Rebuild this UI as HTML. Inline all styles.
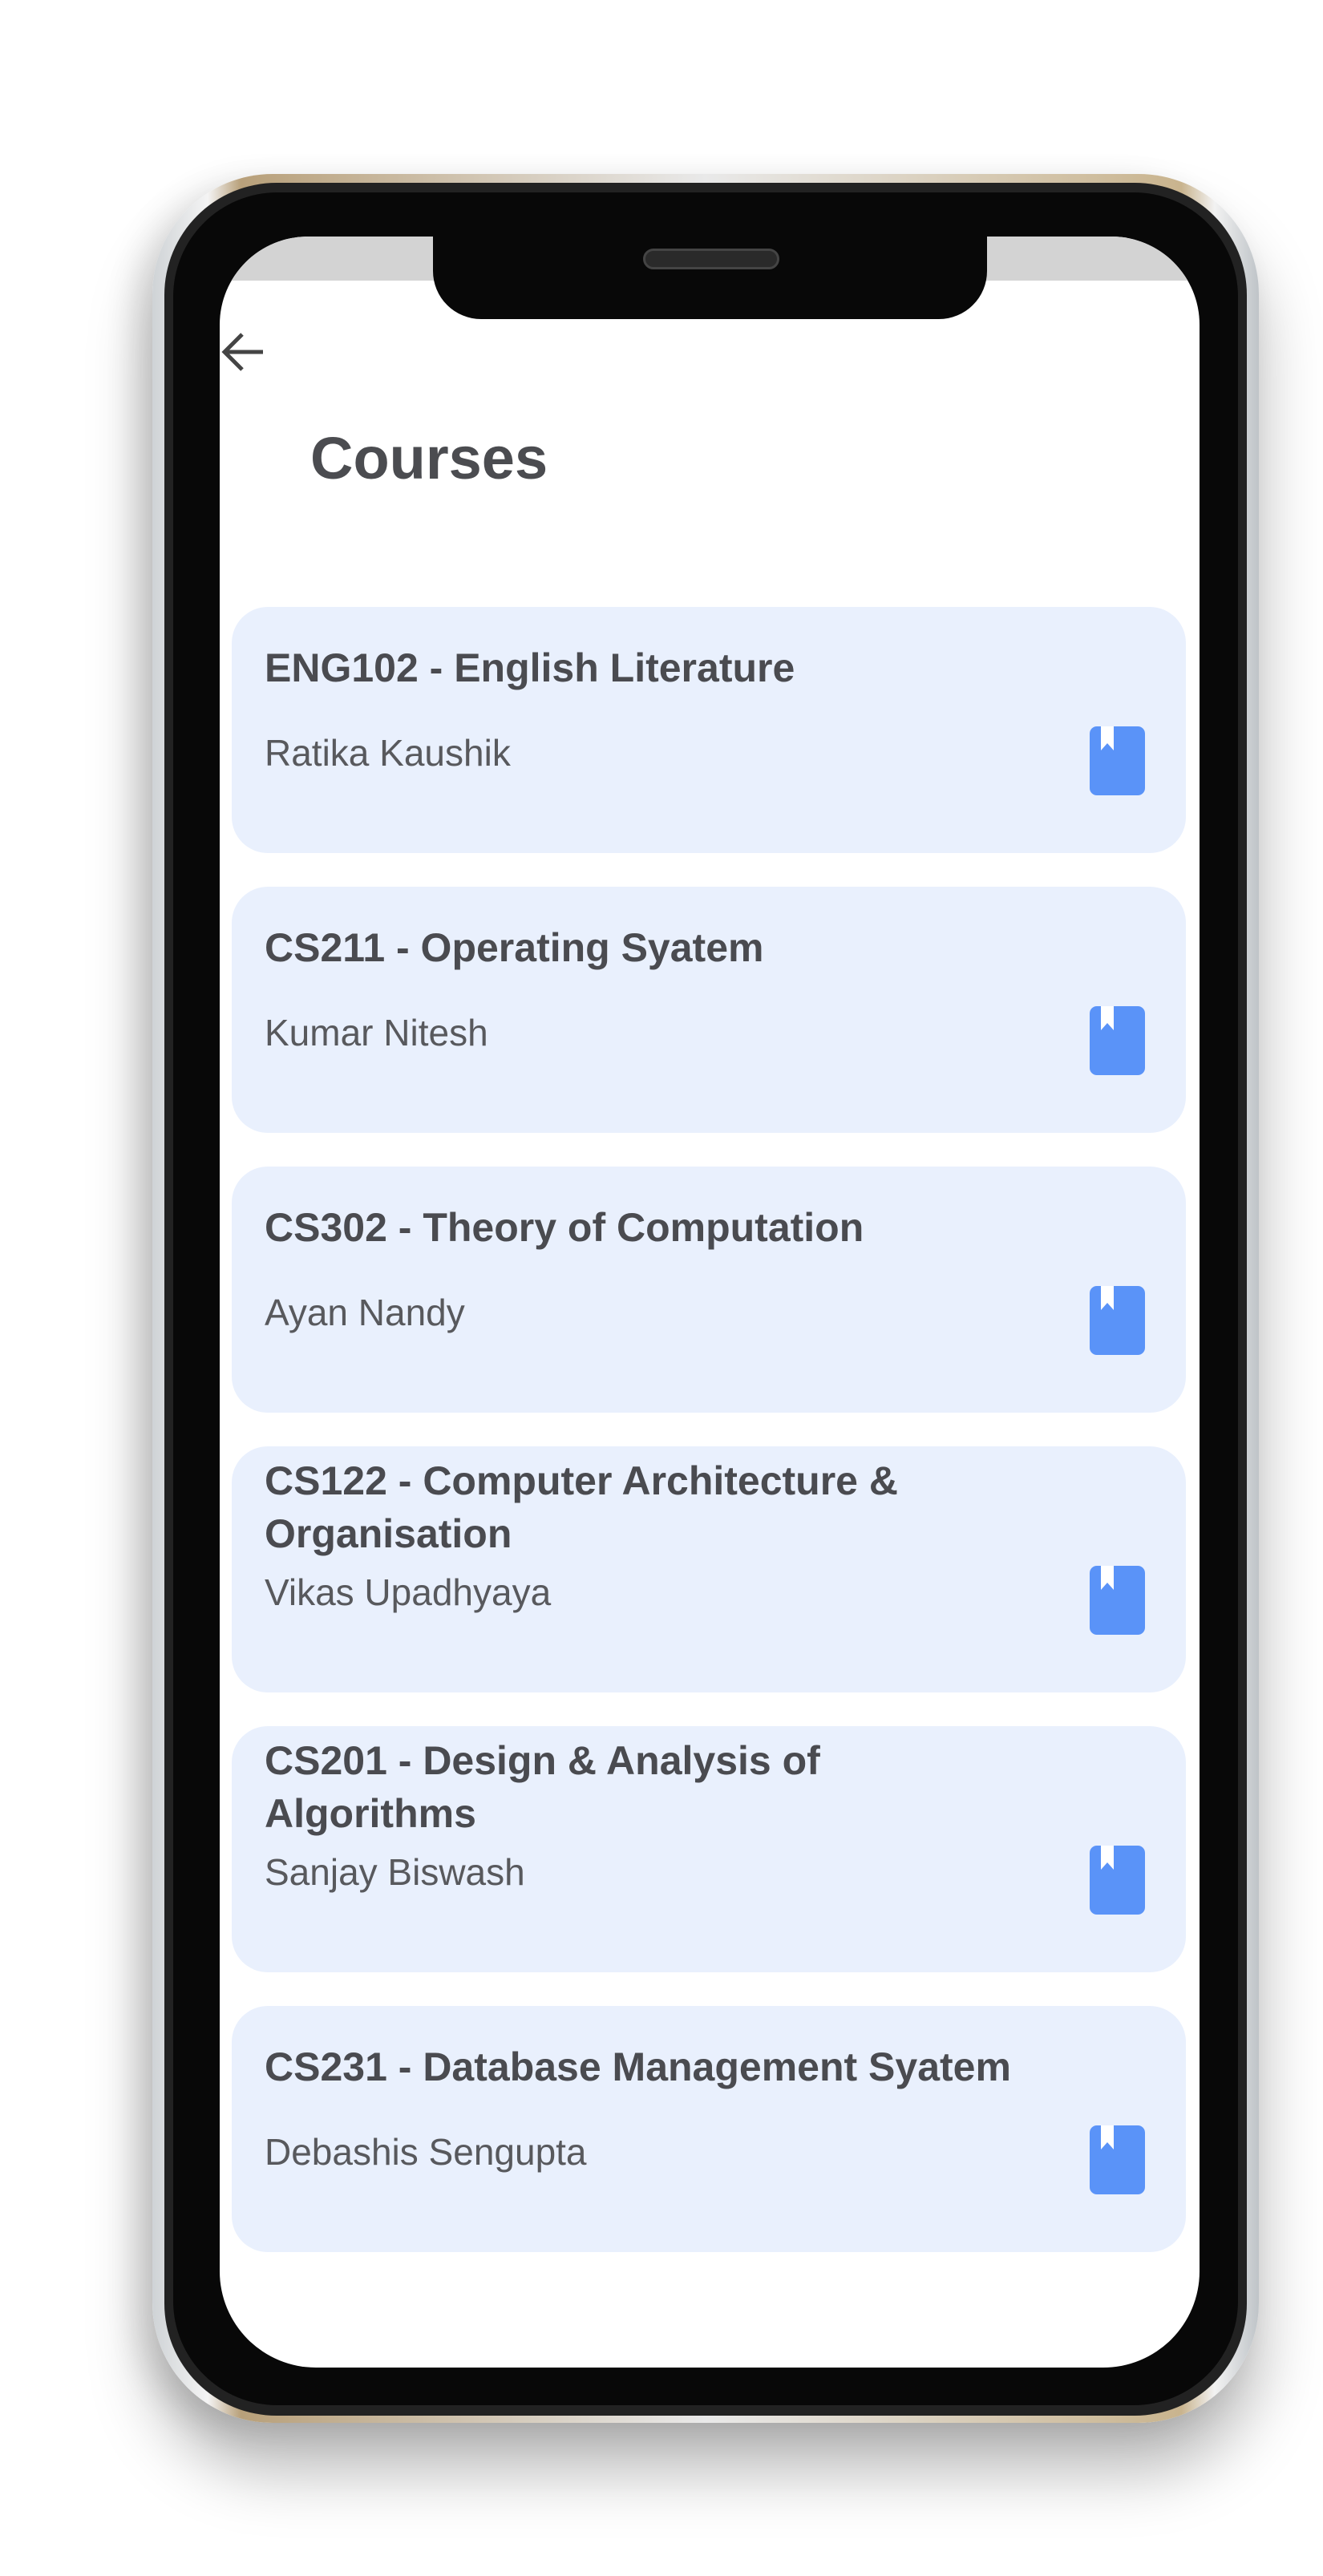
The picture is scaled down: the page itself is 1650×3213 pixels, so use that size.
<!DOCTYPE html>
<html><head><meta charset="utf-8"><style>
*{margin:0;padding:0;box-sizing:border-box}
body{width:1650px;height:3213px;background:#fff;position:relative;overflow:hidden;font-family:"Liberation Sans",sans-serif}
.outer{position:absolute;left:190px;top:217px;width:1380px;height:2805px;border-radius:150px;background:linear-gradient(90deg,#cfd3d6,#f4f4f4 5%,#b8a07a 8%,#e9e9e9 50%,#c9b48e 93%,#f2f2f2 96%,#bfc4c8);box-shadow:0 60px 80px rgba(0,0,0,.28),-20px 10px 40px rgba(0,0,0,.12)}
.rim{position:absolute;left:205px;top:228px;width:1350px;height:2785px;border-radius:140px;background:#222}
.bezel{position:absolute;left:216px;top:240px;width:1328px;height:2760px;border-radius:130px;background:#080808}
.screen{position:absolute;left:274px;top:295px;width:1222px;height:2658px;border-radius:110px 110px 120px 120px;background:#fff;overflow:hidden}
.status{position:absolute;left:0;top:0;width:100%;height:55px;background:#d3d3d3}
.notch{position:absolute;left:266px;top:-10px;width:691px;height:113px;background:#080808;border-radius:0 0 60px 60px}
.spk{position:absolute;left:802px;top:310px;width:170px;height:26px;border-radius:13px;background:#2a2a2a;border:3px solid #444}
h1{position:absolute;left:113px;top:234px;font-size:74px;font-weight:bold;color:#4b4c50}
.card{position:absolute;left:15px;width:1190px;height:307px;border-radius:45px;background:#e9f0fd}
.t{position:absolute;left:41px;font-size:50px;font-weight:bold;color:#4a4b50;line-height:66px}
.s{position:absolute;left:41px;top:155px;font-size:46px;color:#58595d;line-height:54px}
.ic{position:absolute;left:1070px;top:149px;width:69px;height:86px;border-radius:9px;background:#5a93f8}
.ic:after{content:"";position:absolute;left:14px;top:0;width:16px;height:30px;background:#fff;clip-path:polygon(0 0,100% 0,100% 100%,50% 70%,0 100%)}
</style></head><body>
<div class="outer"></div><div class="rim"></div><div class="bezel"></div>
<div class="screen">
<div class="status"></div>
<div class="notch"></div>
<svg style="position:absolute;left:0;top:114px" width="60" height="60" viewBox="0 0 60 60"><path d="M54 30H6M28 8L6 30l22 22" fill="none" stroke="#444" stroke-width="5"/></svg>
<h1>Courses</h1>
<div class="card" style="top:462px"><div class="t" style="top:43px">ENG102 - English Literature</div><div class="s">Ratika Kaushik</div><div class="ic"></div></div>
<div class="card" style="top:811px"><div class="t" style="top:43px">CS211 - Operating Syatem</div><div class="s">Kumar Nitesh</div><div class="ic"></div></div>
<div class="card" style="top:1160px"><div class="t" style="top:43px">CS302 - Theory of Computation</div><div class="s">Ayan Nandy</div><div class="ic"></div></div>
<div class="card" style="top:1509px"><div class="t" style="top:10px">CS122 - Computer Architecture &amp;<br>Organisation</div><div class="s">Vikas Upadhyaya</div><div class="ic"></div></div>
<div class="card" style="top:1858px"><div class="t" style="top:10px">CS201 - Design &amp; Analysis of<br>Algorithms</div><div class="s">Sanjay Biswash</div><div class="ic"></div></div>
<div class="card" style="top:2207px"><div class="t" style="top:43px">CS231 - Database Management Syatem</div><div class="s">Debashis Sengupta</div><div class="ic"></div></div>
</div>
<div class="spk"></div>
</body></html>
